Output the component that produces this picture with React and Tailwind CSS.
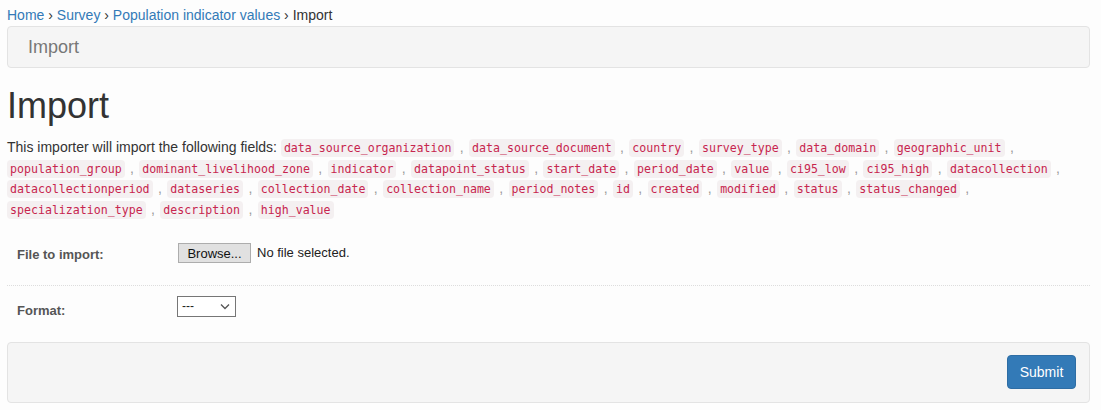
const fields = [
  "data_source_organization",
  "data_source_document",
  "country",
  "survey_type",
  "data_domain",
  "geographic_unit",
  "population_group",
  "dominant_livelihood_zone",
  "indicator",
  "datapoint_status",
  "start_date",
  "period_date",
  "value",
  "ci95_low",
  "ci95_high",
  "datacollection",
  "datacollectionperiod",
  "dataseries",
  "collection_date",
  "collection_name",
  "period_notes",
  "id",
  "created",
  "modified",
  "status",
  "status_changed",
  "specialization_type",
  "description",
  "high_value",
];

const Field = ({ name }) => (
  <code className="px-[3px] py-[2px] rounded-[4px] bg-[#f4f0f1] text-[#c7254e] text-[11.6px] leading-[14px] font-['DejaVu_Sans_Mono',monospace]">
    {name}
  </code>
);

export default function App() {
  return (
    <div className="min-h-[410px] bg-[#fdfdfd] pl-[7px] pr-[11px] text-[14px] text-[#333] font-['Liberation_Sans',Arial,sans-serif]">
      <div className="pt-[5px] leading-[20px]">
        <a className="text-[#337ab7]">Home</a> › <a className="text-[#337ab7]">Survey</a> ›{" "}
        <a className="text-[#337ab7]">Population indicator values</a> › Import
      </div>

      <div className="mt-[1px] h-[42px] flex items-center px-[20px] bg-[#f5f5f5] border border-[#e3e3e3] rounded-[4px]">
        <span className="text-[18px] text-[#777]">Import</span>
      </div>

      <h1 className="mt-[18px] mb-[10px] text-[36px] leading-[40px] text-[#333]">Import</h1>

      <p className="pt-[1px] leading-[20.67px]">
        This importer will import the following fields:{" "}
        {fields.map((f, i) => (
          <span key={f}>
            <Field name={f} />
            {i < fields.length - 1 ? <span className="px-[1.5px] text-[#999]"> , </span> : null}
          </span>
        ))}
      </p>

      <div className="mt-[12px]">
        <div className="h-[54px] flex items-start pt-[11px] border-b border-dotted border-[#ddd]">
          <div className="w-[171px] pl-[10px] pt-[3px] text-[13px] leading-[18px] font-bold text-[#555]">
            File to import:
          </div>
          <div className="flex items-center gap-[6px] text-[13px] leading-[20px]">
            <button className="h-[20px] w-[73px] bg-[#e1e1e1] border border-[#adadad] text-[13px] text-[#111]">
              Browse...
            </button>
            <span className="text-[#222]">No file selected.</span>
          </div>
        </div>

        <div className="h-[56px] flex items-start pt-[10px]">
          <div className="w-[170px] pl-[10px] pt-[6px] text-[13px] leading-[18px] font-bold text-[#555]">Format:</div>
          <div className="relative w-[59px] h-[21px] border border-[#767676] bg-white flex items-center pl-[4px] text-[12px] text-[#222]">
            <span>---</span>
            <svg className="absolute right-[5px] top-[6px]" width="10" height="7" viewBox="0 0 10 7" fill="none">
              <path d="M1 1.5 L5 5.5 L9 1.5" stroke="#555" strokeWidth="1.3" />
            </svg>
          </div>
        </div>
      </div>

      <div className="flex justify-end items-center h-[61px] pr-[13px] bg-[#f5f5f5] border border-[#e3e3e3] rounded-[4px]">
        <button className="h-[34px] w-[69px] rounded-[4px] bg-[#337ab7] border border-[#2e6da4] text-white text-[14px]">
          Submit
        </button>
      </div>
    </div>
  );
}
